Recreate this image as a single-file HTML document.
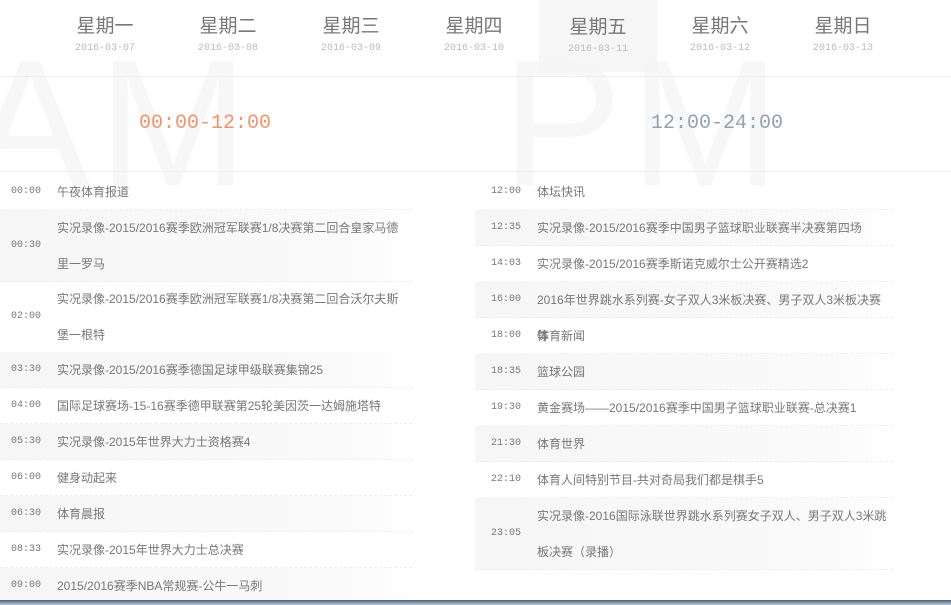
<!DOCTYPE html>
<html><head><meta charset="utf-8"><style>
*{margin:0;padding:0;box-sizing:border-box}
body{width:951px;height:605px;overflow:hidden;background:#fff;font-family:"Liberation Sans","Noto Sans CJK SC",sans-serif;position:relative;color:#666}
.wm{position:absolute;font-family:"Liberation Sans",sans-serif;font-size:180px;color:#f7f7f7;line-height:1;top:34px;letter-spacing:8px}
.day{position:absolute;top:0;width:116px;height:72px;text-align:center}
.day b{display:block;font-weight:normal;font-size:19px;color:#777;margin-top:15px;line-height:24px}
.day i{display:block;font-style:normal;font-size:10px;color:#bbb;font-family:"Liberation Mono",monospace;margin-top:4px}
.hl{background:rgba(245,245,245,.85)}
.hline{position:absolute;left:0;width:951px;height:1px;background:#eee}
.range{position:absolute;top:112px;font-family:"Liberation Mono",monospace;font-size:20px}
.row{position:absolute;height:36px;font-size:12px;line-height:36px;border-bottom:1px dashed #eee}
.row.alt{background:linear-gradient(to right,#f6f6f6,#fafafa 85%,#fff)}
.row .t{position:absolute;left:11px;top:0;font-family:"Liberation Mono",monospace;font-size:10px;color:#777}
.row .n{position:absolute;left:57px;top:0;color:#777}
.row.d{height:72px}
.row.d .t{line-height:72px}
.bar{position:absolute;left:0;top:600px;width:951px;height:5px;background:linear-gradient(#4c5f74,#b8c9da)}
</style></head><body>
<div class="wm" style="left:-30px">AM</div>
<div class="wm" style="left:502px">PM</div>
<div class="day" style="left:47px"><b>星期一</b><i>2016-03-07</i></div>
<div class="day" style="left:170px"><b>星期二</b><i>2016-03-08</i></div>
<div class="day" style="left:293px"><b>星期三</b><i>2016-03-09</i></div>
<div class="day" style="left:416px"><b>星期四</b><i>2016-03-10</i></div>
<div class="day hl" style="left:539px;width:118px"><b style="margin-top:16px">星期五</b><i>2016-03-11</i></div>
<div class="day" style="left:662px"><b>星期六</b><i>2016-03-12</i></div>
<div class="day" style="left:785px"><b>星期日</b><i>2016-03-13</i></div>
<div class="hline" style="top:76px"></div>
<div class="range" style="left:139px;color:#f0956a">00:00-12:00</div>
<div class="range" style="left:651px;color:#8da4b4">12:00-24:00</div>
<div class="hline" style="top:171px"></div>

<div class="row" style="left:0;width:412px;top:174px"><span class="t">00:00</span><span class="n">午夜体育报道</span></div>
<div class="row d alt" style="left:0;width:412px;top:210px"><span class="t">00:30</span><span class="n">实况录像-2015/2016赛季欧洲冠军联赛1/8决赛第二回合皇家马德<br>里一罗马</span></div>
<div class="row d" style="left:0;width:412px;top:281px"><span class="t">02:00</span><span class="n">实况录像-2015/2016赛季欧洲冠军联赛1/8决赛第二回合沃尔夫斯<br>堡一根特</span></div>
<div class="row alt" style="left:0;width:412px;top:352px"><span class="t">03:30</span><span class="n">实况录像-2015/2016赛季德国足球甲级联赛集锦25</span></div>
<div class="row" style="left:0;width:412px;top:388px"><span class="t">04:00</span><span class="n">国际足球赛场-15-16赛季德甲联赛第25轮美因茨一达姆施塔特</span></div>
<div class="row alt" style="left:0;width:412px;top:424px"><span class="t">05:30</span><span class="n">实况录像-2015年世界大力士资格赛4</span></div>
<div class="row" style="left:0;width:412px;top:460px"><span class="t">06:00</span><span class="n">健身动起来</span></div>
<div class="row alt" style="left:0;width:412px;top:496px"><span class="t">06:30</span><span class="n">体育晨报</span></div>
<div class="row" style="left:0;width:412px;top:532px"><span class="t">08:33</span><span class="n">实况录像-2015年世界大力士总决赛</span></div>
<div class="row alt" style="left:0;width:412px;top:568px"><span class="t">09:00</span><span class="n">2015/2016赛季NBA常规赛-公牛一马刺</span></div>

<div class="row" style="left:480px;width:413px;top:174px"><span class="t">12:00</span><span class="n">体坛快讯</span></div>
<div class="row alt" style="left:475px;width:418px;top:210px"><span class="t" style="left:16px">12:35</span><span class="n" style="left:62px">实况录像-2015/2016赛季中国男子篮球职业联赛半决赛第四场</span></div>
<div class="row" style="left:480px;width:413px;top:246px"><span class="t">14:03</span><span class="n">实况录像-2015/2016赛季斯诺克威尔士公开赛精选2</span></div>
<div class="row alt" style="left:475px;width:418px;top:282px"><span class="t" style="left:16px">16:00</span><span class="n" style="left:62px">2016年世界跳水系列赛-女子双人3米板决赛、男子双人3米板决赛等</span></div>
<div class="row" style="left:480px;width:413px;top:318px"><span class="t">18:00</span><span class="n">体育新闻</span></div>
<div class="row alt" style="left:475px;width:418px;top:354px"><span class="t" style="left:16px">18:35</span><span class="n" style="left:62px">篮球公园</span></div>
<div class="row" style="left:480px;width:413px;top:390px"><span class="t">19:30</span><span class="n">黄金赛场——2015/2016赛季中国男子篮球职业联赛-总决赛1</span></div>
<div class="row alt" style="left:475px;width:418px;top:426px"><span class="t" style="left:16px">21:30</span><span class="n" style="left:62px">体育世界</span></div>
<div class="row" style="left:480px;width:413px;top:462px"><span class="t">22:10</span><span class="n">体育人间特别节目-共对奇局我们都是棋手5</span></div>
<div class="row d alt" style="left:475px;width:418px;top:498px"><span class="t" style="left:16px">23:05</span><span class="n" style="left:62px">实况录像-2016国际泳联世界跳水系列赛女子双人、男子双人3米跳<br>板决赛（录播）</span></div>
<div class="bar"></div>
</body></html>
